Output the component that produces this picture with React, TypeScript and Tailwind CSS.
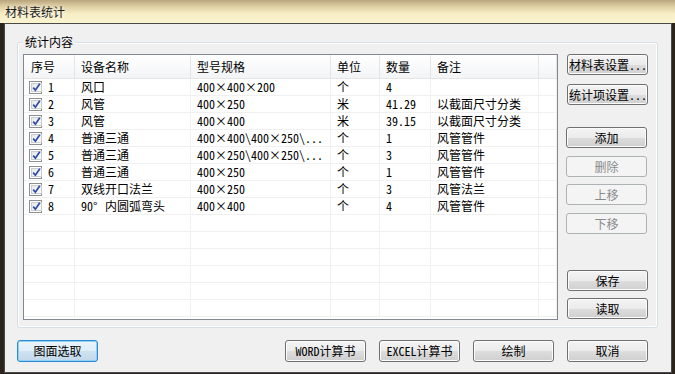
import React from "react";

const MONO = "font-['Noto_Sans_Mono_CJK_SC','Noto_Sans_CJK_SC',monospace]";

function fmt(s: string) {
  const out: React.ReactNode[] = [];
  let buf = "";
  let k = 0;
  for (const ch of s) {
    if (ch === "×" || ch === "°") {
      if (buf) out.push(<span key={k++}>{buf}</span>);
      buf = "";
      out.push(
        <span key={k++} className={`inline-block w-[12px] ${ch === "°" ? "text-left" : "text-center"}`}>
          {ch}
        </span>
      );
    } else buf += ch;
  }
  if (buf) out.push(<span key={k++}>{buf}</span>);
  return out;
}

const rows = [
  ["1", "风口", "400×400×200", "个", "4", ""],
  ["2", "风管", "400×250", "米", "41.29", "以截面尺寸分类"],
  ["3", "风管", "400×400", "米", "39.15", "以截面尺寸分类"],
  ["4", "普通三通", "400×400\\400×250\\...", "个", "1", "风管管件"],
  ["5", "普通三通", "400×250\\400×250\\...", "个", "3", "风管管件"],
  ["6", "普通三通", "400×250", "个", "1", "风管管件"],
  ["7", "双线开口法兰", "400×250", "个", "3", "风管法兰"],
  ["8", "90° 内圆弧弯头", "400×400", "个", "4", "风管管件"],
];

function Check() {
  return (
    <span className="w-[13px] h-[13px] shrink-0 border border-[#8e8f8f] bg-white p-[1px] flex">
      <span className="flex-1 border border-[#c8cdd2] bg-[linear-gradient(135deg,#e6e8ea,#fbfbfb)] flex items-center justify-center">
        <svg width="9" height="9" viewBox="0 0 9 9">
          <path d="M1.2 4.6 L3.4 7.2 L7.8 0.8" stroke="#2b4aa8" strokeWidth="1.7" fill="none" />
        </svg>
      </span>
    </span>
  );
}

function Btn({
  children,
  className = "",
  disabled = false,
  primary = false,
}: {
  children: React.ReactNode;
  className?: string;
  disabled?: boolean;
  primary?: boolean;
}) {
  if (disabled)
    return (
      <div
        className={`w-[81px] h-[21px] rounded-[3px] border border-[#adb2b5] bg-[#f4f4f4] text-[#8a8a8a] flex items-center justify-center ${MONO} text-[12px] ${className}`}
      >
        {children}
      </div>
    );
  if (primary)
    return (
      <div
        className={`w-[81px] h-[22px] rounded-[3px] border border-[#2a8ad4] bg-[linear-gradient(#eaf4fb_0%,#e0eef8_50%,#cfe2f0_51%,#c2d8e9_100%)] shadow-[inset_0_0_0_1px_#8fd0f5] flex items-center justify-center text-black ${MONO} text-[12px] ${className}`}
      >
        {children}
      </div>
    );
  return (
    <div
      className={`w-[81px] h-[21px] rounded-[3px] border border-[#707070] bg-[linear-gradient(#f4f4f4_0%,#ebebeb_50%,#dddddd_51%,#cfcfcf_100%)] shadow-[inset_0_0_0_1px_#fcfcfc] flex items-center justify-center text-black ${MONO} text-[12px] whitespace-nowrap overflow-hidden ${className}`}
    >
      {children}
    </div>
  );
}

const cols = ["w-[51px]", "w-[116px]", "w-[140px]", "w-[49px]", "w-[51px]", "w-[108px]"];

export default function App() {
  const empties = Array.from({ length: 6 });
  return (
    <div className="w-[675px] h-[374px] overflow-hidden bg-[#2a241c] flex flex-col font-['Noto_Sans_CJK_SC',sans-serif] text-[12px] text-black">
      {/* title bar */}
      <div className="h-[23px] shrink-0 bg-[linear-gradient(180deg,#b9a47e_0%,#dccb9f_25%,#f7eec6_60%,#fbf4cf_100%)] pl-[5px] flex items-center">
        <span className="text-[12px] leading-none text-[#1a1a1a] [text-shadow:0_0_4px_#ffffff]">材料表统计</span>
      </div>
      {/* body */}
      <div className="ml-[4px] w-[668px] h-[350px] shrink-0 border border-[#4a4a4a] bg-[#f0f0f0] flex flex-col">
        {/* group box */}
        <div className="relative ml-[12px] mt-[18px] w-[641px] h-[286px] rounded-[3px] border border-[#d5dfe5] shadow-[inset_0_0_0_1px_#ffffff] flex pl-[5px] pt-[11px]">
          <span className="absolute left-[5px] top-[-8px] px-[2px] bg-[#f0f0f0] leading-[14px] text-[12px]">统计内容</span>
          {/* list */}
          <div className="w-[535px] h-[266px] border border-[#828790] bg-white overflow-hidden flex flex-col">
            <div className="h-[24px] shrink-0 flex border-b border-[#e5e5e5] bg-[linear-gradient(#ffffff,#f3f4f6)]">
              {["序号", "设备名称", "型号规格", "单位", "数量", "备注"].map((h, i) => (
                <div
                  key={h}
                  className={`${cols[i]} shrink-0 h-full border-r border-[#e3e5e8] flex items-center ${i === 0 ? "pl-[7px]" : "pl-[6px]"}`}
                >
                  {h}
                </div>
              ))}
              <div className="flex-1 border-r border-[#e3e5e8]" />
            </div>
            {rows.map((r) => (
              <div key={r[0]} className={`h-[17px] shrink-0 flex border-b border-[#f0f0f0] ${MONO} text-[12px] leading-none`}>
                <div className={`${cols[0]} shrink-0 border-r border-[#f0f0f0] flex items-center pl-[5px] gap-[6px]`}>
                  <Check />
                  <span>{r[0]}</span>
                </div>
                {r.slice(1).map((c, i) => (
                  <div
                    key={i}
                    className={`${cols[i + 1]} shrink-0 border-r border-[#f0f0f0] flex items-center pl-[6px] whitespace-nowrap overflow-hidden`}
                  >
                    {fmt(c)}
                  </div>
                ))}
                <div className="flex-1 border-r border-[#f0f0f0]" />
              </div>
            ))}
            {empties.map((_, j) => (
              <div key={j} className="h-[17px] shrink-0 flex border-b border-[#f0f0f0]">
                {cols.map((c, i) => (
                  <div key={i} className={`${c} shrink-0 border-r border-[#f0f0f0]`} />
                ))}
                <div className="flex-1 border-r border-[#f0f0f0]" />
              </div>
            ))}
          </div>
          {/* side buttons */}
          <div className="ml-[8px] flex flex-col">
            <Btn className="ml-[1px] justify-start pl-[1px]">材料表设置...</Btn>
            <Btn className="ml-[1px] mt-[9px] justify-start pl-[1px]">统计项设置...</Btn>
            <Btn className="mt-[22px]">添加</Btn>
            <Btn className="mt-[8px]" disabled>删除</Btn>
            <Btn className="mt-[7px]" disabled>上移</Btn>
            <Btn className="mt-[8px]" disabled>下移</Btn>
            <Btn className="ml-[1px] mt-[36px]">保存</Btn>
            <Btn className="ml-[1px] mt-[7px]">读取</Btn>
          </div>
        </div>
        {/* bottom buttons */}
        <div className="mt-[12px] pl-[12px] pr-[23px] flex">
          <Btn primary>图面选取</Btn>
          <div className="flex-1" />
          <div className="flex gap-[13px]">
            <Btn className="h-[22px]">WORD计算书</Btn>
            <Btn className="h-[22px]">EXCEL计算书</Btn>
            <Btn className="h-[22px]">绘制</Btn>
            <Btn className="h-[22px]">取消</Btn>
          </div>
        </div>
      </div>
    </div>
  );
}
